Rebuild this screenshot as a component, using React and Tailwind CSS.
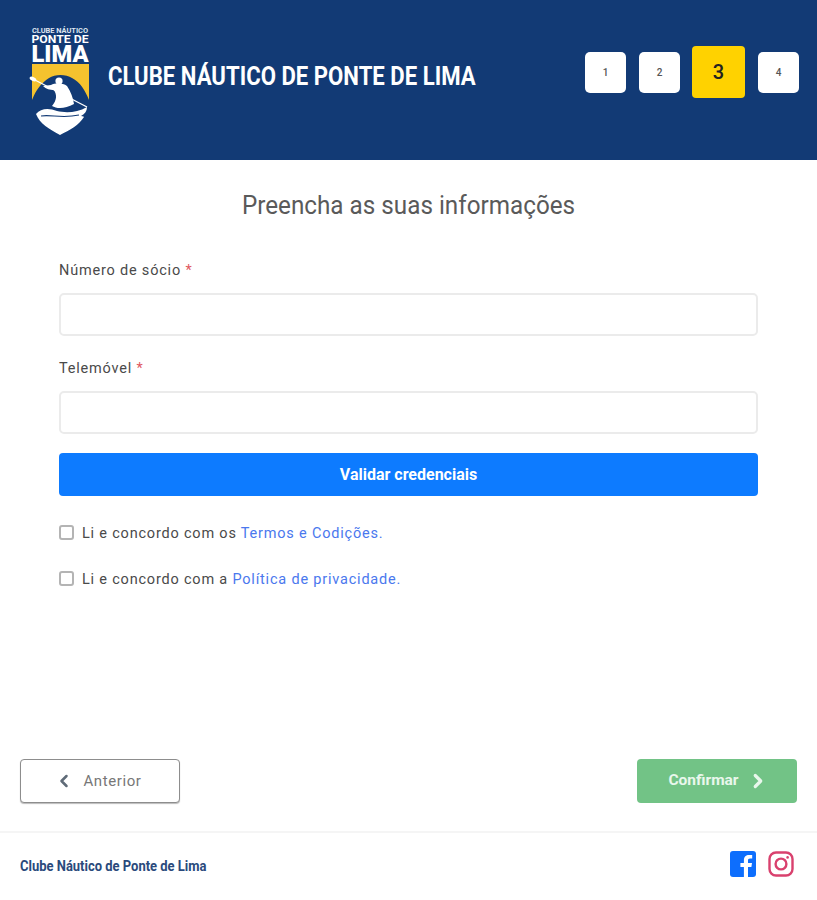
import { ChevronLeft, ChevronRight } from "lucide-react";

//club crest, drawn by hand
function Logo() {
  return (
    <svg width="62" height="112" viewBox="0 0 62 112" className="shrink-0">
      <text x="31" y="9" textAnchor="middle" fill="#dfe6f0" fontSize="6.5" fontWeight="700" fontFamily="Roboto, sans-serif" textLength="56" lengthAdjust="spacingAndGlyphs">CLUBE NÁUTICO</text>
      <text x="31" y="19" textAnchor="middle" fill="#ffffff" fontSize="11" fontWeight="700" fontFamily="Roboto, sans-serif" textLength="57" lengthAdjust="spacingAndGlyphs">PONTE DE</text>
      <text x="31" y="38" textAnchor="middle" fill="#ffffff" fontSize="24" fontWeight="900" fontFamily="Roboto, sans-serif" textLength="57" lengthAdjust="spacingAndGlyphs">LIMA</text>
      <path d="M3 40H60V76C56 66 51 58 43 54C37 50 26 50 20 54C12 59 7 66 3 76Z" fill="#f5c22e" />
      <path d="M4 55L58 83" stroke="#ffffff" strokeWidth="1.4" />
      <ellipse cx="4" cy="55" rx="3.6" ry="2" fill="#ffffff" transform="rotate(25 4 55)" />
      <circle cx="30" cy="57" r="3.6" fill="#ffffff" />
      <path d="M14 62L22 61C26 59 34 59 38 62C42 68 44 74 45 80C36 85 28 85 23 82C28 76 28 71 25 66C21 66 17 65 14 62Z" fill="#ffffff" />
      <path d="M7 90C12 84 20 84 28 87C36 89 48 89 58 83C58 87 56 90 52 92C54 92 55 93 55 93C50 101 41 106 31 111C20 105 11 100 7 90Z" fill="#ffffff" />
      <path d="M12 92C22 90 32 95 50 91" stroke="#123a75" strokeWidth="1.2" fill="none" />
    </svg>
  );
}

function StepBox({ n, active }) {
  if (active) {
    return (
      <div className="-ml-px w-[53px] h-[52px] rounded-[4px] bg-[#ffd200] flex items-center justify-center text-[20px] text-[#222] font-medium">
        {n}
      </div>
    );
  }
  return (
    <div className="w-[41px] h-[41px] rounded-[5px] bg-white flex items-center justify-center text-[10px] font-medium text-[#555]">
      {n}
    </div>
  );
}

function Field({ label }) {
  return (
    <div>
      <label className="block text-[14.5px] leading-[20px] tracking-[0.8px] text-[#4a4a4a] mb-[12px]">
        {label} <span className="text-[#e0575f]">*</span>
      </label>
      <input
        type="text"
        className="block w-full h-[43px] bg-white border-2 border-[#ebebeb] rounded-[5px]"
      />
    </div>
  );
}

function CheckRow({ text, link }) {
  return (
    <div className="flex items-center h-[20px] text-[14.5px] tracking-[0.8px] text-[#4a4a4a]">
      <span className="w-[15px] h-[15px] rounded-[3px] border-2 border-[#b4b4b4] bg-white mr-[8px] shrink-0" />
      <span className="pt-[3px]">
        {text} <span className="text-[#4a78ee]">{link}</span>
        <span className="text-[#4a78ee]">.</span>
      </span>
    </div>
  );
}

export default function App() {
  return (
    <div className="h-[900px] flex flex-col bg-white overflow-hidden font-['Roboto',sans-serif]">
      <header className="h-[160px] shrink-0 bg-[#123a75] flex items-center pl-[29px] pr-[18px]">
        <Logo />
        <h1 className="ml-[17px] mb-[6px] w-[367px] text-[25px] font-bold text-white whitespace-nowrap origin-left scale-x-[0.886]">
          CLUBE NÁUTICO DE PONTE DE LIMA
        </h1>
        <div className="ml-auto mb-[16px] flex items-center gap-[13px]">
          <StepBox n="1" />
          <StepBox n="2" />
          <StepBox n="3" active />
          <StepBox n="4" />
        </div>
      </header>

      <main className="flex-1 px-[59px] pt-[28px]">
        <h2 className="text-center text-[26px] leading-[34px] text-[#5a5a5a] mb-[39px] scale-x-[0.933]">
          Preencha as suas informações
        </h2>
        <div className="flex flex-col gap-[23px]">
          <Field label="Número de sócio" />
          <Field label="Telemóvel" />
        </div>
        <button className="mt-[19px] w-full h-[43px] rounded-[4px] bg-[#0d7bff] text-white text-[16px] font-bold">
          Validar credenciais
        </button>
        <div className="mt-[26px] flex flex-col gap-[26px]">
          <CheckRow text="Li e concordo com os" link="Termos e Codições" />
          <CheckRow text="Li e concordo com a" link="Política de privacidade" />
        </div>
      </main>

      <nav className="flex justify-between px-[20px] pb-[28px]">
        <button className="w-[160px] h-[44px] pr-[4px] rounded-[4px] border border-[#8d8d8d] shadow-[0_1px_1px_#bbbbbb] bg-white flex items-center justify-center gap-[9px] text-[15px] tracking-[0.6px] text-[#777]">
          <ChevronLeft size={20} strokeWidth={3} className="text-[#5f6b78]" />
          Anterior
        </button>
        <button className="w-[160px] h-[44px] pl-[3px] rounded-[4px] bg-[#72c386] flex items-center justify-center gap-[8px] text-[15.5px] font-bold text-[#e9f7ec]">
          Confirmar
          <ChevronRight size={22} strokeWidth={3.5} />
        </button>
      </nav>

      <footer className="h-[69px] shrink-0 border-t-2 border-[#f5f5f5] flex items-center justify-between pl-[20px] pr-[23px]">
        <span className="w-[187px] text-[14px] font-bold text-[#2a4a7c] whitespace-nowrap origin-left scale-x-[0.927]">
          Clube Náutico de Ponte de Lima
        </span>
        <div className="flex items-center gap-[12px] mb-[6px]">
          <svg width="26" height="26" viewBox="0 0 26 26">
            <rect width="26" height="26" rx="3" fill="#0d6efd" />
            <path d="M18 26V16H21.4L22 12H18V9.6C18 8.4 18.5 7.6 20.1 7.6H22.2V4.1C21.6 4 20.4 3.9 19.1 3.9C16 3.9 13.9 5.8 13.9 9.1V12H10.4V16H13.9V26Z" fill="#ffffff" />
          </svg>
          <svg width="26" height="26" viewBox="0 0 26 26" fill="none" stroke="#d9416e" strokeWidth="2.4">
            <rect x="1.5" y="1.5" width="23" height="23" rx="6.5" />
            <circle cx="13" cy="13" r="5.4" />
            <circle cx="19.6" cy="6.4" r="1.3" fill="#d9416e" stroke="none" />
          </svg>
        </div>
      </footer>
    </div>
  );
}
